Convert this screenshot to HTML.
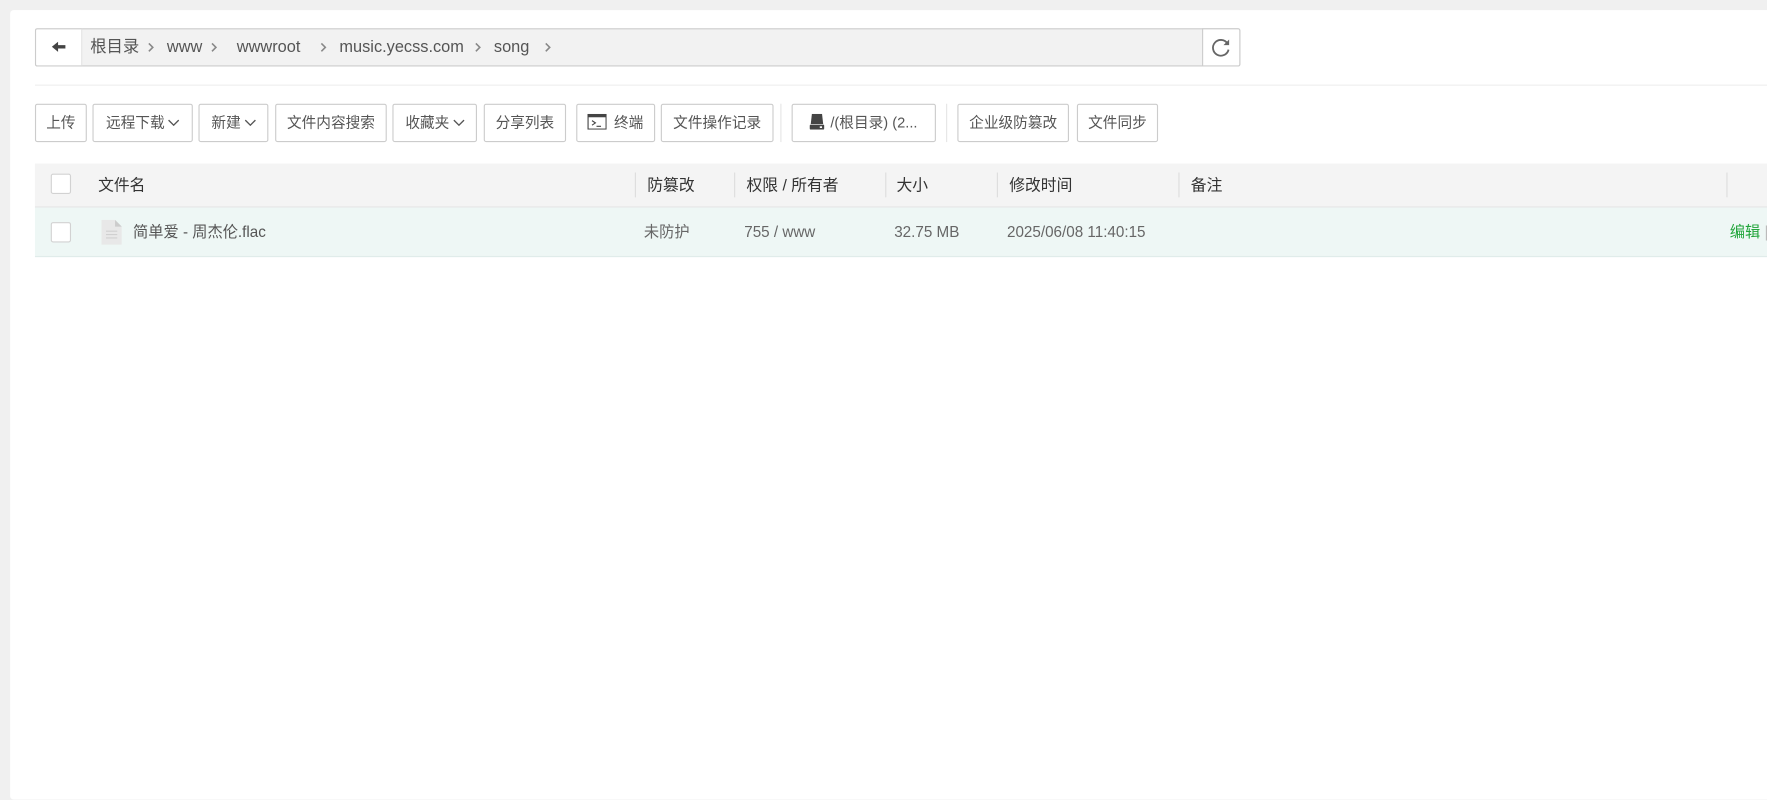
<!DOCTYPE html>
<html><head><meta charset="utf-8"><style>
html,body{margin:0;padding:0;width:1767px;height:778px;overflow:hidden;background:#f0f0f0}
#w{position:absolute;left:0;top:0;width:1567px;height:690px;transform:scale(1.12763);transform-origin:0 0;font-family:"Liberation Sans","Noto Sans CJK SC",sans-serif;color:#555}
.a{position:absolute;box-sizing:border-box}
.panel{left:9px;top:9px;width:1570px;height:700px;background:#fff;border-radius:3px}
.bc{left:31px;top:25px;width:1069px;height:34px;border:1px solid #ccc;border-radius:2px;background:#f2f2f2}
.back{left:31px;top:25px;width:42px;height:34px;border:1px solid #ccc;border-right:1px solid #ddd;background:#fff;border-radius:2px 0 0 2px}
.ref{left:1066px;top:25px;width:34px;height:34px;border:1px solid #ccc;background:#fff;border-radius:0 2px 2px 0}
.cr{top:25px;height:34px;line-height:34px;font-size:14.5px;color:#555;white-space:nowrap}
.ch{top:37px}
.btn{top:92px;height:34px;border:1px solid #ccc;border-radius:2px;background:#fff;font-size:13px;line-height:32px;text-align:center;color:#555;white-space:nowrap}
.sep{top:92px;width:1px;height:34px;background:#e5e5e5}
.th{left:31px;top:145px;width:1540px;height:39px;background:#f4f4f4;border-bottom:1px solid #e6e6e6}
.tr{left:31px;top:184px;width:1540px;height:44px;background:#eef7f5;border-bottom:1px solid #e0ecea}
.cb{width:18px;height:18px;border:1px solid #d2d2d2;background:#fff;border-radius:2px}
.ht{top:145px;height:39px;line-height:39px;font-size:14px;color:#333}
.rt{top:184px;height:44px;line-height:44px;font-size:13.5px;color:#666;white-space:nowrap}
.vd{top:153px;width:1px;height:22px;background:#ddd}
.dd{vertical-align:1px;margin-left:3px}
</style></head><body><div id="w">
<div class="a panel"></div>
<div class="a bc"></div>
<div class="a back"><svg width="40" height="32" viewBox="0 0 40 32"><path d="M14 15.5 L19.5 11 V14 H26 V17 H19.5 V20 Z" fill="#444"/></svg></div>
<div class="a ref"><svg width="32" height="32" viewBox="0 0 32 32"><path d="M21.5 12.5 A7 7 0 1 0 22.5 18" fill="none" stroke="#666" stroke-width="1.6"/><path d="M23 9 V14 H18 Z" fill="#666"/></svg></div>
<div class="a cr" style="left:80px">根目录</div>
<div class="a cr" style="left:148px">www</div>
<div class="a cr" style="left:210px">wwwroot</div>
<div class="a cr" style="left:301px">music.yecss.com</div>
<div class="a cr" style="left:438px">song</div>
<svg class="a ch" style="left:130px" width="8" height="10" viewBox="0 0 8 10"><path d="M2 1.5 L5.5 5 L2 8.5" fill="none" stroke="#888" stroke-width="1.4"/></svg>
<svg class="a ch" style="left:186px" width="8" height="10" viewBox="0 0 8 10"><path d="M2 1.5 L5.5 5 L2 8.5" fill="none" stroke="#888" stroke-width="1.4"/></svg>
<svg class="a ch" style="left:283px" width="8" height="10" viewBox="0 0 8 10"><path d="M2 1.5 L5.5 5 L2 8.5" fill="none" stroke="#888" stroke-width="1.4"/></svg>
<svg class="a ch" style="left:420px" width="8" height="10" viewBox="0 0 8 10"><path d="M2 1.5 L5.5 5 L2 8.5" fill="none" stroke="#888" stroke-width="1.4"/></svg>
<svg class="a ch" style="left:482px" width="8" height="10" viewBox="0 0 8 10"><path d="M2 1.5 L5.5 5 L2 8.5" fill="none" stroke="#888" stroke-width="1.4"/></svg>
<div class="a" style="left:31px;top:75px;width:1540px;height:1px;background:#eee"></div>

<div class="a btn" style="left:31px;width:46px">上传</div>
<div class="a btn" style="left:82px;width:89px">远程下载<svg class="dd" width="10" height="6" viewBox="0 0 10 6"><path d="M0.5 0.5 L5 5 L9.5 0.5" fill="none" stroke="#555" stroke-width="1.2"/></svg></div>
<div class="a btn" style="left:176px;width:62px">新建<svg class="dd" width="10" height="6" viewBox="0 0 10 6"><path d="M0.5 0.5 L5 5 L9.5 0.5" fill="none" stroke="#555" stroke-width="1.2"/></svg></div>
<div class="a btn" style="left:244px;width:99px">文件内容搜索</div>
<div class="a btn" style="left:348px;width:75px">收藏夹<svg class="dd" width="10" height="6" viewBox="0 0 10 6"><path d="M0.5 0.5 L5 5 L9.5 0.5" fill="none" stroke="#555" stroke-width="1.2"/></svg></div>
<div class="a btn" style="left:429px;width:73px">分享列表</div>
<div class="a btn" style="left:511px;width:70px"><svg width="17" height="14" viewBox="0 0 17 14" style="vertical-align:-2px;margin-right:6px"><rect x="0.5" y="0.5" width="16" height="13" fill="#fff" stroke="#444"/><rect x="0.5" y="0.5" width="16" height="2.5" fill="#444"/><path d="M4 6 L7 8 L4 10" fill="none" stroke="#444"/><path d="M8 11 H12" stroke="#444"/></svg>终端</div>
<div class="a btn" style="left:586px;width:100px">文件操作记录</div>
<div class="a sep" style="left:692px"></div>
<div class="a btn" style="left:702px;width:128px"><svg width="13" height="14" viewBox="0 0 13 14" style="vertical-align:-2px;margin-right:5px"><path d="M2 0 H11 L12 9 H1 Z" fill="#444"/><rect x="0" y="9.5" width="13" height="4.5" rx="1" fill="#444"/><rect x="9" y="11" width="2" height="1.5" fill="#fff"/></svg>/(根目录) (2...</div>
<div class="a sep" style="left:839px"></div>
<div class="a btn" style="left:849px;width:99px">企业级防篡改</div>
<div class="a btn" style="left:955px;width:72px">文件同步</div>

<div class="a th"></div>
<div class="a tr"></div>
<div class="a cb" style="left:45px;top:154px"></div>
<div class="a cb" style="left:45px;top:197px"></div>
<div class="a ht" style="left:87px">文件名</div>
<div class="a vd" style="left:563px"></div><div class="a ht" style="left:574px">防篡改</div>
<div class="a vd" style="left:651px"></div><div class="a ht" style="left:662px">权限 / 所有者</div>
<div class="a vd" style="left:785px"></div><div class="a ht" style="left:795px">大小</div>
<div class="a vd" style="left:884px"></div><div class="a ht" style="left:895px">修改时间</div>
<div class="a vd" style="left:1045px"></div><div class="a ht" style="left:1056px">备注</div>
<div class="a vd" style="left:1531px"></div>

<div class="a" style="left:90px;top:195px"><svg width="18" height="22" viewBox="0 0 18 22"><path d="M0 0 H12 L18 6 V22 H0 Z" fill="#e8e8e8"/><path d="M12 0 V6 H18" fill="#ccc"/><path d="M4 10 H14 M4 13 H14 M4 16 H14" stroke="#d0d0d0"/></svg></div>
<div class="a rt" style="left:118px;color:#555">简单爱 - 周杰伦.flac</div>
<div class="a rt" style="left:571px">未防护</div>
<div class="a rt" style="left:660px">755 / www</div>
<div class="a rt" style="left:793px">32.75 MB</div>
<div class="a rt" style="left:893px">2025/06/08 11:40:15</div>
<div class="a rt" style="left:1534px;color:#20a53a">编辑 <span style="color:#bbb">|</span></div>
</div></body></html>
